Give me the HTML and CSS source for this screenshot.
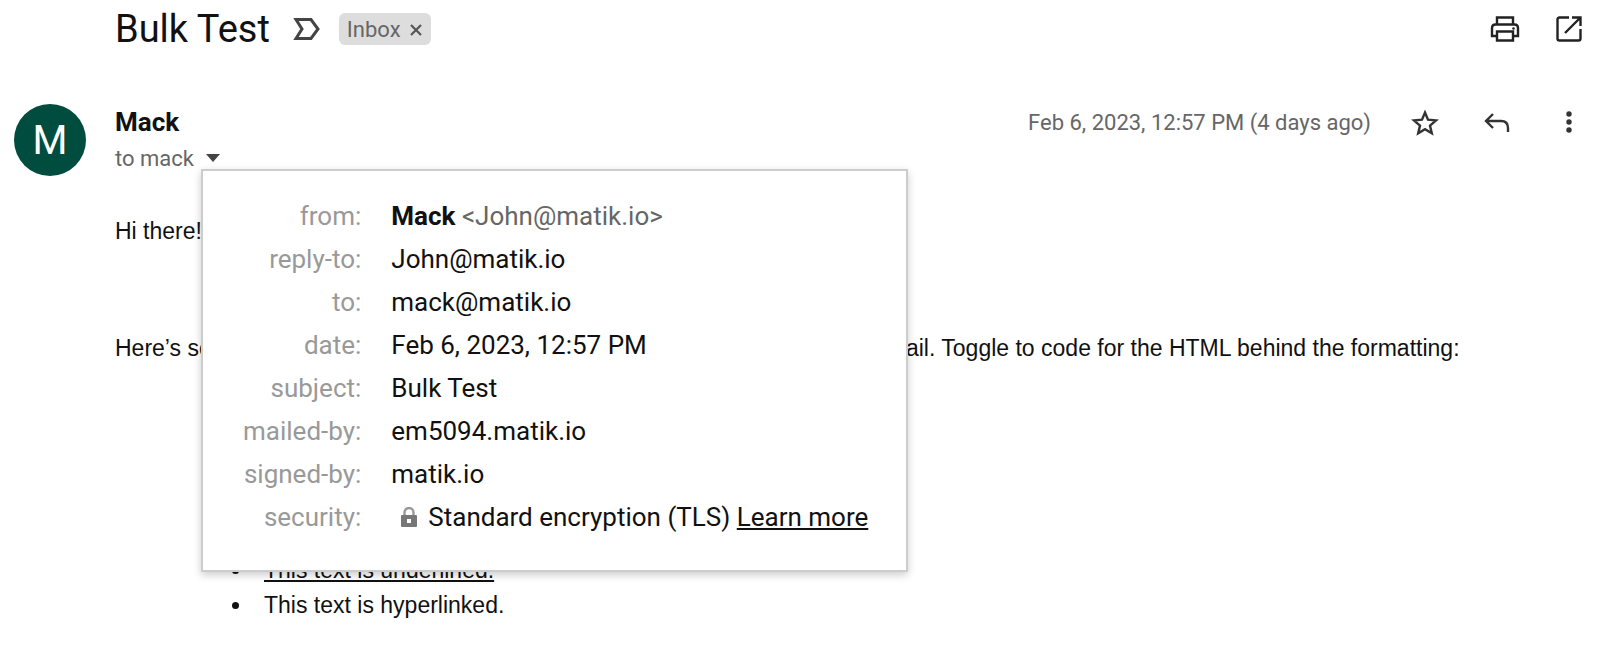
FILE: index.html
```
<!DOCTYPE html>
<html lang="en">
<head>
  <meta charset="UTF-8">
  <meta name="viewport" content="width=device-width, initial-scale=1.0">
  <title>Bulk Test</title>
  <link rel="stylesheet" href="styles.css">
</head>
<body>
  <header class="subject-bar">
    <h1>Bulk Test</h1>
    <button class="icon-btn important" aria-label="Mark as important">
      <svg width="28" height="24" viewBox="0 0 28 24"><path d="M3 2.500H18L25 12L18 21.500H3L9 12Z" fill="none" stroke="#444" stroke-width="3"/></svg>
    </button>
    <span class="label">Inbox
      <button class="icon-btn" aria-label="Remove label Inbox">
        <svg width="14" height="14" viewBox="0 0 14 14"><path d="M2 3L12 13M12 3L2 13" stroke="#555" stroke-width="2.200"/></svg>
      </button>
    </span>
    <div class="subject-actions">
      <button class="icon-btn" aria-label="Print all">
        <svg width="30" height="26" viewBox="0 0 30 26" fill="none" stroke="#222" stroke-width="2.400"><path d="M7 8V1.500H23V8M7 20H2V12Q2 8.500 5.500 8.500H24.500Q28 8.500 28 12V20H23M7 15.500H23V24.500H7Z"/><circle cx="23.500" cy="12.500" r="1.300" fill="#222" stroke="none"/></svg>
      </button>
      <button class="icon-btn" aria-label="In new window">
        <svg width="26" height="26" viewBox="0 0 26 26" fill="none" stroke="#222" stroke-width="2.400"><path d="M13 1.500H3.500Q1.500 1.500 1.500 3.500V22.500Q1.500 24.500 3.500 24.500H22.500Q24.500 24.500 24.500 22.500V13M16 1.500H24.500V10M24.500 1.500L9 17"/></svg>
      </button>
    </div>
  </header>

  <main class="message">
    <div class="avatar">M</div>
    <div class="message-main">
      <div class="message-head">
        <div class="sender">
          <strong class="sender-name">Mack</strong>
          <div class="recipient">
            <button class="details-btn" aria-expanded="true" aria-controls="details">to mack
              <svg width="14" height="8" viewBox="0 0 14 8"><path d="M0 0H14L7 8Z" fill="#444"/></svg>
            </button>
            <div class="details" id="details">
              <table>
                <tr><th scope="row">from:</th><td><b>Mack</b> <span class="address">&lt;John@matik.io&gt;</span></td></tr>
                <tr><th scope="row">reply-to:</th><td>John@matik.io</td></tr>
                <tr><th scope="row">to:</th><td>mack@matik.io</td></tr>
                <tr><th scope="row">date:</th><td>Feb 6, 2023, 12:57 PM</td></tr>
                <tr><th scope="row">subject:</th><td>Bulk Test</td></tr>
                <tr><th scope="row">mailed-by:</th><td>em5094.matik.io</td></tr>
                <tr><th scope="row">signed-by:</th><td>matik.io</td></tr>
                <tr><th scope="row">security:</th><td><svg class="lock" width="18" height="20" viewBox="0 0 18 20"><path d="M4.500 9V5.500a4.500 4.500 0 0 1 9 0V9" fill="none" stroke="#999" stroke-width="2.400"/><rect x="1" y="8" width="16" height="12" rx="1" fill="#777"/><rect x="7" y="12" width="4" height="4" fill="#fff"/></svg>Standard encryption (TLS) <a href="#">Learn more</a></td></tr>
              </table>
            </div>
          </div>
        </div>
        <div class="message-actions">
          <time datetime="2023-02-06T12:57">Feb 6, 2023, 12:57 PM (4 days ago)</time>
          <button class="icon-btn" aria-label="Star">
            <svg width="28" height="28" viewBox="0 0 28 28"><path d="M14 4.500L17 11.700L25 12.400L19 17.600L20.800 25.300L14 21.200L7.200 25.300L9 17.600L3 12.400L11 11.700Z" fill="none" stroke="#333" stroke-width="2.400"/></svg>
          </button>
          <button class="icon-btn" aria-label="Reply">
            <svg width="28" height="24" viewBox="0 0 28 24"><path d="M10 4L3 11L10 18M3 11H18Q25 11 25 18V22" fill="none" stroke="#333" stroke-width="2.400"/></svg>
          </button>
          <button class="icon-btn" aria-label="More">
            <svg width="28" height="24" viewBox="0 0 28 24" fill="#333"><circle cx="14" cy="4" r="2.700"/><circle cx="14" cy="12" r="2.700"/><circle cx="14" cy="20" r="2.700"/></svg>
          </button>
        </div>
      </div>

      <div class="message-body">
        <p>Hi there!</p>
        <p>Here’s some sample text to show the formatting options you can use in an email. Toggle to code for the HTML behind the formatting:</p>
        <ul>
          <li><b>This text is bold.</b></li>
          <li><i>This text is italicized.</i></li>
          <li><u>This text is underlined.</u></li>
          <li>This text is hyperlinked.</li>
        </ul>
      </div>
    </div>
  </main>
</body>
</html>
```
FILE: styles.css
```
body {
  margin: 0;
  background-color: #fff;
  color: #111;
  font-family: Roboto, "Liberation Sans", sans-serif;
  font-size: 22px;
}
.icon-btn, .details-btn {
  display: flex;
  align-items: center;
  padding: 0;
  border: none;
  background: none;
  font: inherit;
  color: inherit;
  cursor: pointer;
}
.subject-bar {
  display: flex;
  align-items: center;
  height: 58px;
  padding: 0 18px 0 115px;
}
.subject-bar h1 {
  margin: 0;
  font-size: 38px;
  font-weight: normal;
}
.important {
  margin-left: 23px;
}
.label {
  display: flex;
  align-items: center;
  gap: 8px;
  height: 32px;
  margin-left: 18px;
  padding: 0 8px;
  border-radius: 6px;
  background-color: #ddd;
  color: #666;
}
.subject-actions {
  display: flex;
  gap: 36px;
  margin-left: auto;
}
.message {
  display: flex;
  align-items: flex-start;
  gap: 29px;
  padding: 46px 17px 0 14px;
}
.avatar {
  display: flex;
  flex-shrink: 0;
  align-items: center;
  justify-content: center;
  width: 72px;
  height: 72px;
  border-radius: 50%;
  background-color: #004d40;
  color: #fff;
  font-size: 40px;
}
.message-main {
  flex: 1;
}
.message-head {
  display: flex;
  align-items: flex-start;
  justify-content: space-between;
}
.sender-name {
  display: block;
  line-height: 36px;
  font-size: 26px;
}
.recipient {
  position: relative;
}
.details-btn {
  gap: 12px;
  height: 36px;
  color: #666;
}
.message-actions {
  display: flex;
  align-items: center;
  gap: 44px;
  height: 36px;
  color: #666;
}
.message-actions time {
  margin-right: -4px;
}
.details {
  position: absolute;
  top: 29px;
  left: 86px;
  z-index: 1;
  padding: 23px 38px 32px 40px;
  border: 2px solid #ccc;
  background-color: #fff;
  box-shadow: 0 3px 8px rgba(0, 0, 0, 0.2);
  color: #111;
  font-size: 26px;
  white-space: nowrap;
}
.details table {
  border-collapse: collapse;
}
.details th, .details td {
  height: 43px;
  padding: 0;
}
.details th {
  padding-right: 30px;
  color: #999;
  font-weight: normal;
  text-align: right;
}
.address {
  color: #666;
}
.lock {
  margin: 0 10px 0 9px;
  vertical-align: -1px;
}
.details a {
  color: inherit;
}
.message-body {
  margin-top: 36px;
  font-family: "Liberation Sans", Arial, sans-serif;
  font-size: 23px;
  line-height: 39px;
}
.message-body p {
  margin: 0 0 78px;
}
.message-body ul {
  margin: 115px 0 0;
  padding-left: 138px;
  line-height: 35px;
}
.message-body li {
  padding-left: 11px;
}
```
